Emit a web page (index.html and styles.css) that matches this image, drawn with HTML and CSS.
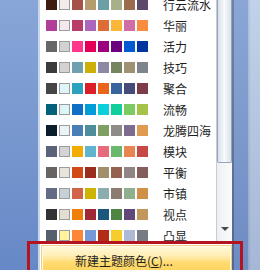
FILE: index.html
```html
<!DOCTYPE html>
<html>
<head>
<meta charset="utf-8">
<link rel="stylesheet" href="styles.css">
</head>
<body>
<div class="screen">
  <div class="side"></div>
  <div class="menu">
    <div class="gallery">
      <div class="list">
        <div class="row"><div class="swatches"><i class="sw" style="background:#3e1c10"></i><i class="sw light" style="background:#f4eceb"></i><i class="sw" style="background:#a5524b"></i><i class="sw" style="background:#b59b6e"></i><i class="sw" style="background:#6b9ea5"></i><i class="sw" style="background:#a8b08b"></i><i class="sw" style="background:#9c6b4e"></i><i class="sw" style="background:#5d4a6b"></i></div><span class="label">行云流水</span></div>
        <div class="row"><div class="swatches"><i class="sw" style="background:#b13f9a"></i><i class="sw light" style="background:#f4e7ed"></i><i class="sw" style="background:#b83d68"></i><i class="sw" style="background:#ac66bb"></i><i class="sw" style="background:#de6c36"></i><i class="sw" style="background:#f9b639"></i><i class="sw" style="background:#cf6da4"></i><i class="sw" style="background:#fa8d3d"></i></div><span class="label">华丽</span></div>
        <div class="row"><div class="swatches"><i class="sw" style="background:#666666"></i><i class="sw light" style="background:#d2d2d2"></i><i class="sw" style="background:#ff388c"></i><i class="sw" style="background:#e40059"></i><i class="sw" style="background:#9c007f"></i><i class="sw" style="background:#68007f"></i><i class="sw" style="background:#005bd3"></i><i class="sw" style="background:#00349e"></i></div><span class="label">活力</span></div>
        <div class="row"><div class="swatches"><i class="sw" style="background:#3b3b3b"></i><i class="sw light" style="background:#d4d2d0"></i><i class="sw" style="background:#6ea0b0"></i><i class="sw" style="background:#ccaf0a"></i><i class="sw" style="background:#8d89a4"></i><i class="sw" style="background:#748560"></i><i class="sw" style="background:#9e9273"></i><i class="sw" style="background:#7e848d"></i></div><span class="label">技巧</span></div>
        <div class="row"><div class="swatches"><i class="sw" style="background:#464646"></i><i class="sw light" style="background:#def5fa"></i><i class="sw" style="background:#2da2bf"></i><i class="sw" style="background:#da1f28"></i><i class="sw" style="background:#eb641b"></i><i class="sw" style="background:#39639d"></i><i class="sw" style="background:#474b78"></i><i class="sw" style="background:#7d3c4a"></i></div><span class="label">聚合</span></div>
        <div class="row"><div class="swatches"><i class="sw" style="background:#04617b"></i><i class="sw light" style="background:#dbf5f9"></i><i class="sw" style="background:#0f6fc6"></i><i class="sw" style="background:#009dd9"></i><i class="sw" style="background:#0bd0d9"></i><i class="sw" style="background:#10cf9b"></i><i class="sw" style="background:#7cca62"></i><i class="sw" style="background:#a5c249"></i></div><span class="label">流畅</span></div>
        <div class="row"><div class="swatches"><i class="sw" style="background:#0c1e2b"></i><i class="sw light" style="background:#eaf3f6"></i><i class="sw" style="background:#4a7fb6"></i><i class="sw" style="background:#4e8d9c"></i><i class="sw" style="background:#7ea163"></i><i class="sw" style="background:#8f8c87"></i><i class="sw" style="background:#7e6c90"></i><i class="sw" style="background:#e09b52"></i></div><span class="label">龙腾四海</span></div>
        <div class="row"><div class="swatches"><i class="sw" style="background:#5a6378"></i><i class="sw light" style="background:#d4d4d4"></i><i class="sw" style="background:#f0ad00"></i><i class="sw" style="background:#60b5cc"></i><i class="sw" style="background:#e66c7d"></i><i class="sw" style="background:#6bb76d"></i><i class="sw" style="background:#e88651"></i><i class="sw" style="background:#c64847"></i></div><span class="label">模块</span></div>
        <div class="row"><div class="swatches"><i class="sw" style="background:#696464"></i><i class="sw light" style="background:#e9e5dc"></i><i class="sw" style="background:#d34817"></i><i class="sw" style="background:#9b2d1f"></i><i class="sw" style="background:#a28e6a"></i><i class="sw" style="background:#956251"></i><i class="sw" style="background:#918485"></i><i class="sw" style="background:#855d5d"></i></div><span class="label">平衡</span></div>
        <div class="row"><div class="swatches"><i class="sw" style="background:#646b86"></i><i class="sw light" style="background:#c5d1d7"></i><i class="sw" style="background:#d16349"></i><i class="sw" style="background:#ccb400"></i><i class="sw" style="background:#8cadae"></i><i class="sw" style="background:#8c7b70"></i><i class="sw" style="background:#8fb08c"></i><i class="sw" style="background:#d19049"></i></div><span class="label">市镇</span></div>
        <div class="row"><div class="swatches"><i class="sw" style="background:#323232"></i><i class="sw light" style="background:#e3ded1"></i><i class="sw" style="background:#f07f09"></i><i class="sw" style="background:#9f2936"></i><i class="sw" style="background:#1b587c"></i><i class="sw" style="background:#4e8542"></i><i class="sw" style="background:#604878"></i><i class="sw" style="background:#c19859"></i></div><span class="label">视点</span></div>
        <div class="row"><div class="swatches"><i class="sw" style="background:#575f6d"></i><i class="sw light" style="background:#fff39d"></i><i class="sw" style="background:#fe8637"></i><i class="sw" style="background:#7598d9"></i><i class="sw" style="background:#b32c16"></i><i class="sw" style="background:#f5cd2d"></i><i class="sw" style="background:#aebad5"></i><i class="sw" style="background:#777c84"></i></div><span class="label">凸显</span></div>
      </div>
      <div class="scrollbar">
        <div class="thumb"></div>
        <div class="track"></div>
        <div class="down"><span class="arrow"></span></div>
      </div>
    </div>
    <div class="footer">
      <div class="item">新建主题颜色(<u>C</u>)...</div>
    </div>
  </div>
  <div class="frame"></div>
  <div class="annot"></div>
</div>
</body>
</html>
```

FILE: styles.css
```css
body {
  margin: 0;
}

.screen {
  width: 260px;
  height: 270px;
  display: flex;
  position: relative;
  overflow: hidden;
  font-family: "Noto Sans CJK SC", "Noto Sans", sans-serif;
  font-size: 12px;
  color: #1e1e1e;
}

.side {
  width: 38px;
  flex: none;
  background: linear-gradient(#88a6d7, #6688c6);
  border-right: 2px solid #c9d6ea;
}

.menu {
  width: 192px;
  flex: none;
  display: flex;
  flex-direction: column;
  background: #ffffff;
}

.gallery {
  height: 241px;
  flex: none;
  display: flex;
}

.list {
  flex: 1;
  margin-top: -6px;
  padding-left: 6px;
  border-right: 1px solid #c8ccd2;
}

.row {
  height: 21px;
  display: flex;
  align-items: center;
}

.swatches {
  display: flex;
  gap: 2px;
}

.sw {
  display: block;
  width: 11px;
  height: 11px;
  box-sizing: border-box;
}

.sw.light {
  border: 1px solid #9c9c9c;
}

.label {
  margin-left: 15px;
  line-height: 13px;
}

.scrollbar {
  width: 15px;
  flex: none;
  display: flex;
  flex-direction: column;
  background: linear-gradient(90deg, #eceff3, #fbfbfc);
}

.thumb {
  height: 163px;
  box-sizing: border-box;
  border: 1px solid #97a3b6;
  border-top: 0;
  border-radius: 0 0 2px 2px;
  background: linear-gradient(90deg, #d9e1eb, #f8fafc 50%, #d9e1eb);
}

.track {
  flex: 1;
}

.down {
  height: 14px;
  display: flex;
  justify-content: center;
  align-items: flex-start;
  padding-top: 1px;
}

.arrow {
  width: 0;
  height: 0;
  border-left: 4px solid transparent;
  border-right: 4px solid transparent;
  border-top: 4px solid #4a4a4a;
}

.footer {
  flex: 1;
  padding-top: 4px;
  padding-left: 1px;
}

.item {
  height: 30px;
  box-sizing: border-box;
  border: 1px solid #f0cf86;
  box-shadow: inset 0 0 0 1px #fffbea;
  background: linear-gradient(#fff8dc, #ffeeb4 35%, #ffdb6e 60%, #fcd15a);
  padding: 8px 0 0 33px;
  line-height: 14px;
}

.frame {
  flex: 1;
  background:
    linear-gradient(rgba(255,255,255,0.12), rgba(20,40,90,0.12)),
    linear-gradient(90deg, #5d7291 0 2px, #7a9ad0 2px 16px, #a9bcdc 16px 18px, #b9cbe6 18px 100%);
}

.annot {
  position: absolute;
  left: 27px;
  top: 241px;
  width: 216px;
  height: 40px;
  box-sizing: border-box;
  border: 3px solid #b3141f;
}
```
